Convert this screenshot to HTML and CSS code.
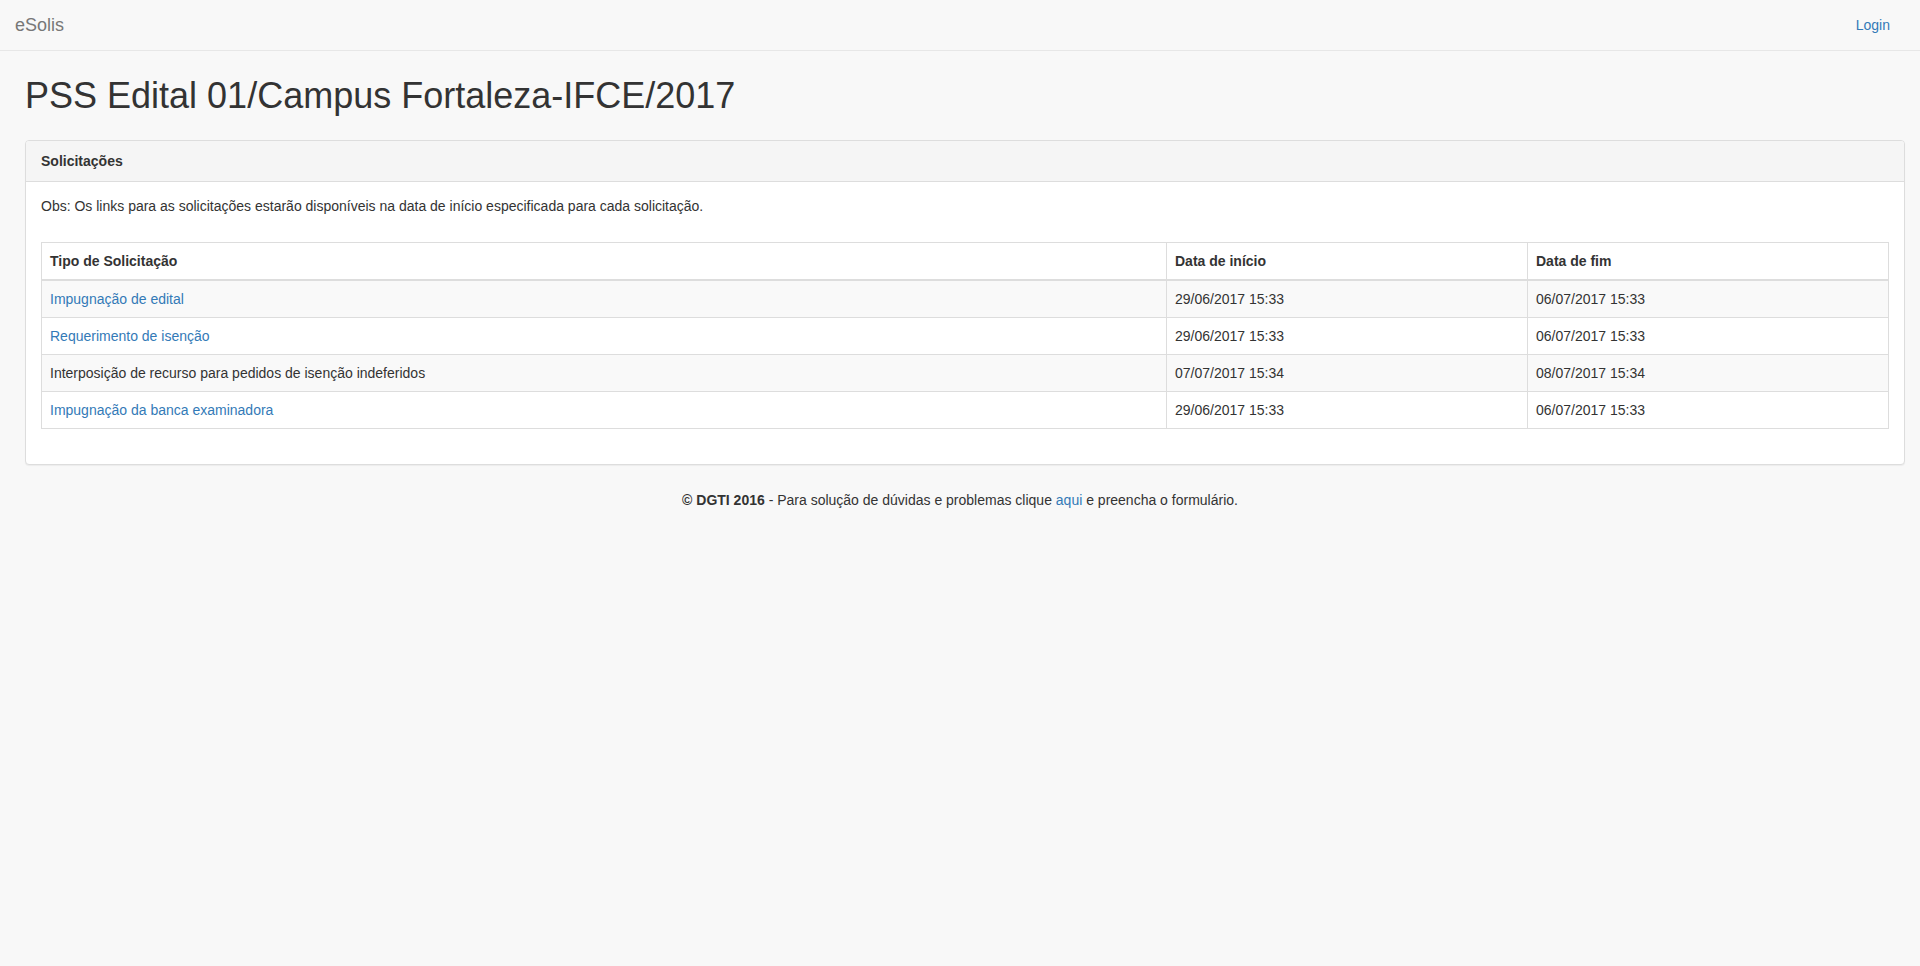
FILE: index.html
```html
<!DOCTYPE html>
<html lang="pt-br">

<head>
    <meta charset="UTF-8">
    <meta name="viewport" content="width=device-width, initial-scale=1.0">
    <title>eSolis - PSS Edital 01/Campus Fortaleza-IFCE/2017</title>

    <link rel="stylesheet" href="styles.css">

</head>
<body>

    <nav class="navbar">
        <a class="navbar-brand" href="#">eSolis</a>
        <a class="navbar-login" href="#">Login</a>
    </nav>

    <div class="content">
        <h1>PSS Edital 01/Campus Fortaleza-IFCE/2017</h1>

        <div class="panel">
            <div class="panel-heading">Solicitações</div>
            <div class="panel-body">
                <p class="obs">Obs: Os links para as solicitações estarão disponíveis na data de início especificada para cada solicitação.</p>

                <table class="solicitacoes">
                    <thead>
                        <tr>
                            <th>Tipo de Solicitação</th>
                            <th class="col-data">Data de início</th>
                            <th class="col-data">Data de fim</th>
                        </tr>
                    </thead>
                    <tbody>
                        <tr>
                            <td><a href="#">Impugnação de edital</a></td>
                            <td>29/06/2017 15:33</td>
                            <td>06/07/2017 15:33</td>
                        </tr>
                        <tr>
                            <td><a href="#">Requerimento de isenção</a></td>
                            <td>29/06/2017 15:33</td>
                            <td>06/07/2017 15:33</td>
                        </tr>
                        <tr>
                            <td>Interposição de recurso para pedidos de isenção indeferidos</td>
                            <td>07/07/2017 15:34</td>
                            <td>08/07/2017 15:34</td>
                        </tr>
                        <tr>
                            <td><a href="#">Impugnação da banca examinadora</a></td>
                            <td>29/06/2017 15:33</td>
                            <td>06/07/2017 15:33</td>
                        </tr>
                    </tbody>
                </table>
            </div>
        </div>
    </div>

    <footer class="footer">
        <strong>© DGTI 2016</strong> - Para solução de dúvidas e problemas clique <a href="#">aqui</a> e preencha o formulário.
    </footer>

</body>
</html>
```

FILE: styles.css
```css
body {
    margin: 0;
    background-color: #f8f8f8;
    color: #333;
    font-family: "Liberation Sans", Arial, sans-serif;
    font-size: 14px;
    line-height: 1.42857;
}

a {
    color: #337ab7;
    text-decoration: none;
}

.navbar {
    display: flex;
    justify-content: space-between;
    align-items: center;
    height: 50px;
    padding: 0 15px 0 0;
    background-color: #f8f8f8;
    border-bottom: 1px solid #e7e7e7;
}

.navbar-brand {
    padding: 15px;
    font-size: 18px;
    line-height: 20px;
    color: #777;
}

.navbar-login {
    padding: 15px;
    line-height: 20px;
}

.content {
    padding: 0 15px 0 25px;
}

h1 {
    margin: 25px 0 24px;
    font-size: 36px;
    font-weight: 500;
    line-height: 1.1;
}

.panel {
    margin-bottom: 20px;
    background-color: #fff;
    border: 1px solid #ddd;
    border-radius: 4px;
    box-shadow: 0 1px 1px rgba(0, 0, 0, 0.05);
}

.panel-heading {
    padding: 10px 15px;
    font-weight: bold;
    line-height: 20px;
    background-color: #f5f5f5;
    border-bottom: 1px solid #ddd;
    border-radius: 3px 3px 0 0;
}

.panel-body {
    padding: 15px;
}

.obs {
    margin: 0 0 25px;
}

.solicitacoes {
    width: 100%;
    margin-bottom: 20px;
    border-collapse: collapse;
    border: 1px solid #ddd;
    table-layout: fixed;
}

.solicitacoes th,
.solicitacoes td {
    padding: 8px;
    line-height: 20px;
    text-align: left;
    border: 1px solid #ddd;
}

.solicitacoes thead th {
    border-bottom: 2px solid #ddd;
}

.solicitacoes .col-data {
    width: 344px;
}

.solicitacoes tbody tr:nth-child(odd) {
    background-color: #f9f9f9;
}

.footer {
    padding: 6px 0;
    text-align: center;
}
```
